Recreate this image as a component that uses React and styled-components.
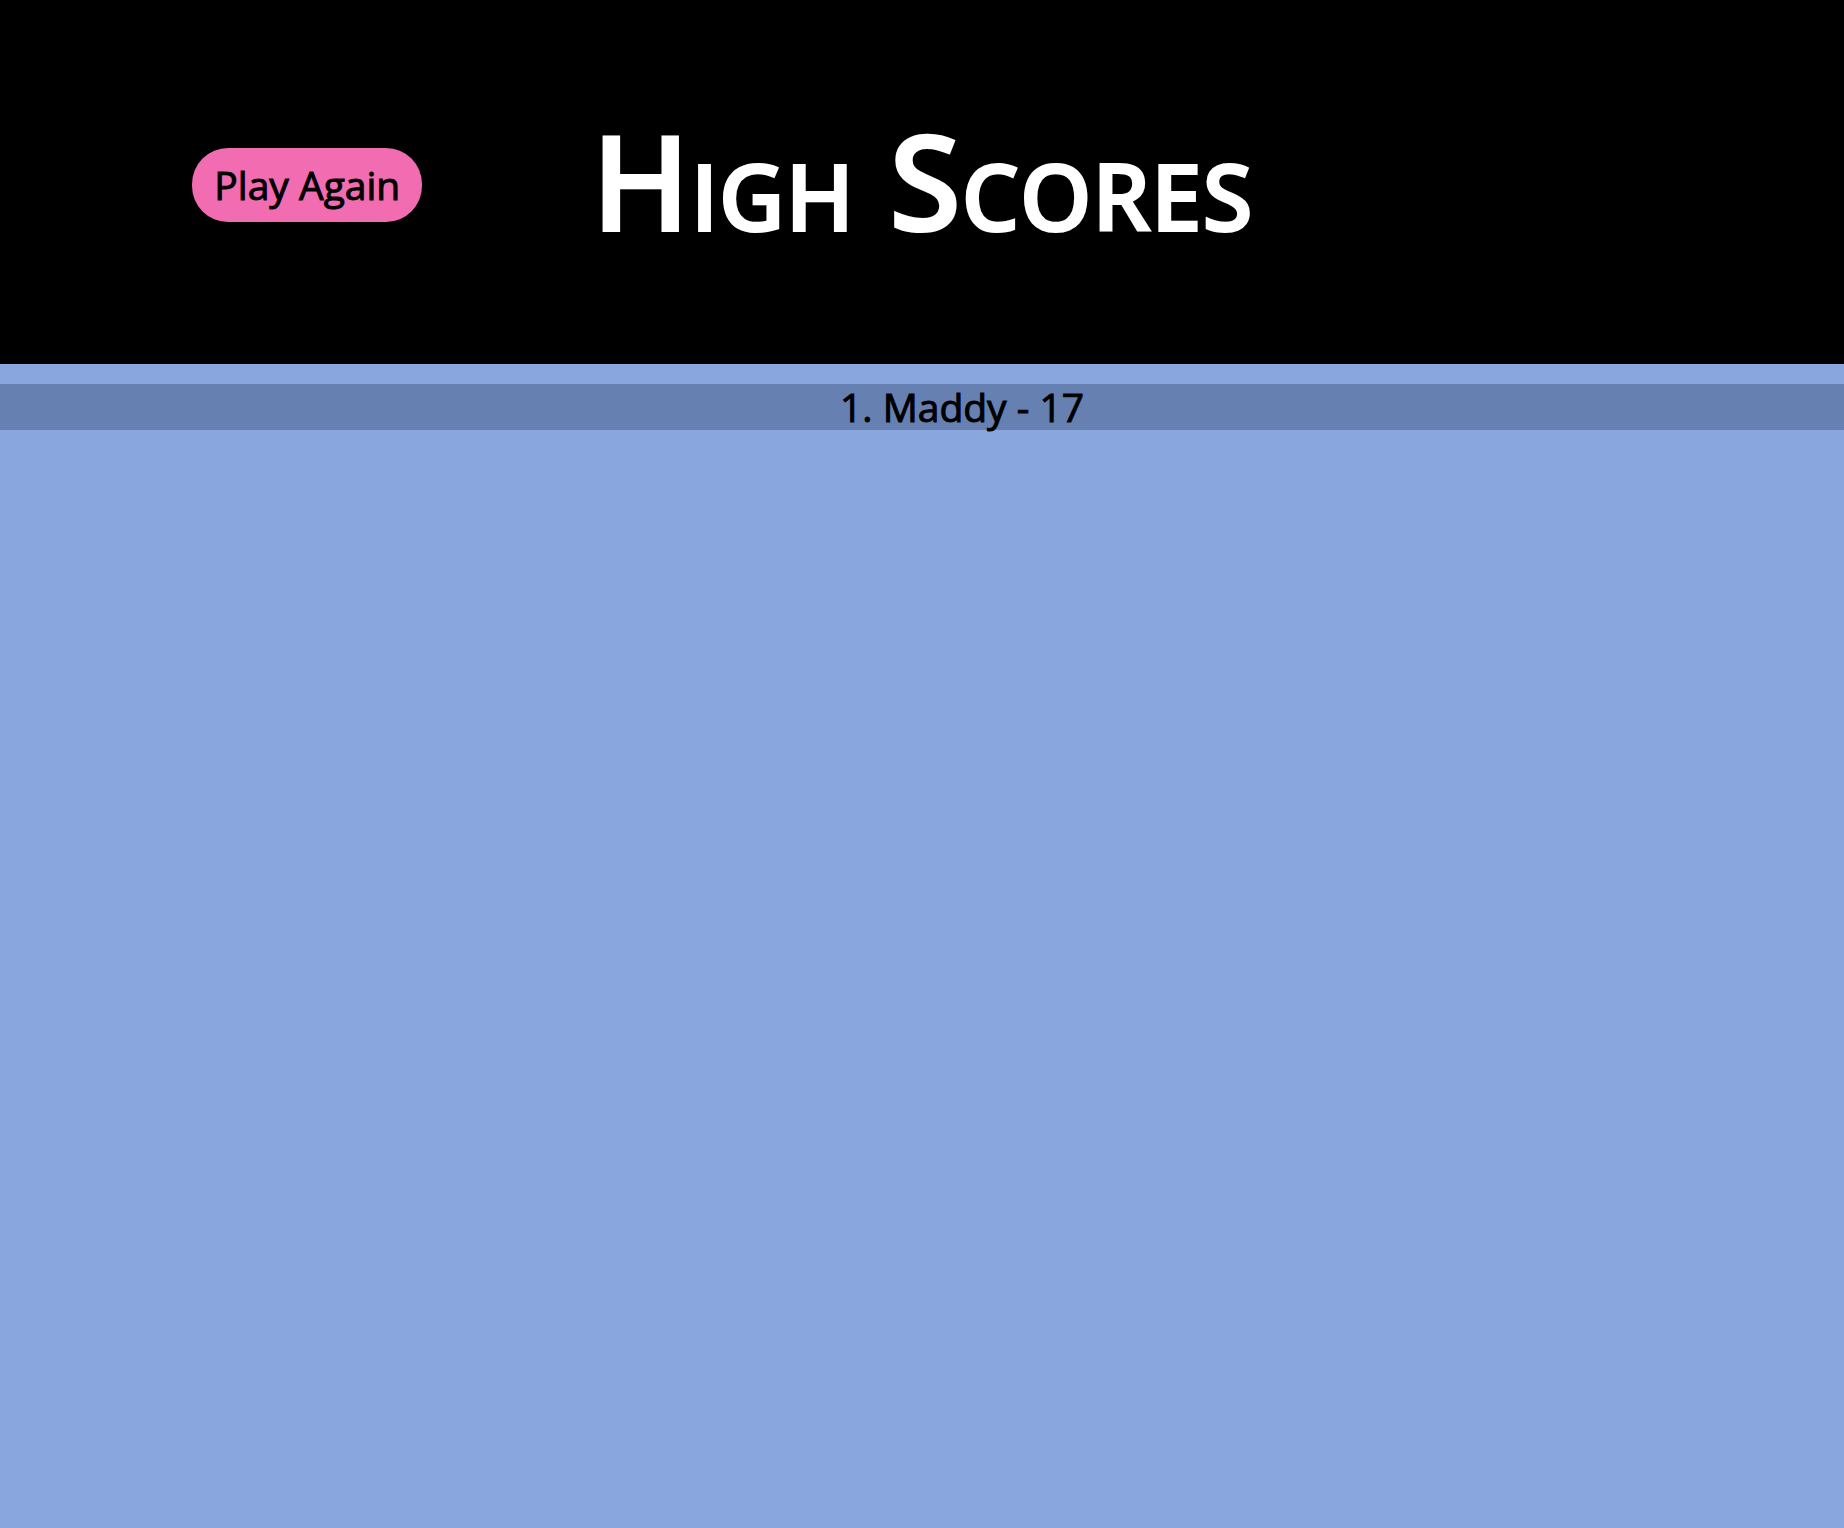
import React from "react";
import styled, { createGlobalStyle } from "styled-components";

const GlobalStyle = createGlobalStyle`
  body {
    margin: 0;
    background: #8aa6de;
    color: #000;
    font-family: "Trebuchet MS", "Open Sans", "Noto Sans", sans-serif;
    font-size: 39px;
    line-height: 46px;
    -webkit-text-stroke: 1px currentColor;
  }
`;

const Header = styled.header`
  display: grid;
  grid-template-columns: repeat(3, minmax(0, 1fr));
  align-items: center;
  padding: 103px 0 97px;
  background: #000;
`;

const Title = styled.h1`
  margin: 0;
  padding-bottom: 10px;
  justify-self: center;
  color: #fff;
  font-size: 132px;
  font-weight: 600;
  line-height: 154px;
  font-variant: small-caps;
  white-space: nowrap;
  -webkit-text-stroke: 2px currentColor;
`;

const PlayButton = styled.button`
  justify-self: center;
  padding: 14px 22px;
  border: 0;
  border-radius: 36px;
  background: #f26cb2;
  color: inherit;
  font: inherit;
  cursor: pointer;
`;

const ScoreList = styled.ol`
  margin: 20px 0;
  padding: 0;
  list-style: none;
`;

const Score = styled.li`
  padding-left: 80px;
  background: #6680b2;
  text-align: center;
`;

const scores = [{ name: "Maddy", points: 17 }];

export default function App() {
  return (
    <>
      <GlobalStyle />
      <Header>
        <PlayButton type="button">Play Again</PlayButton>
        <Title>High Scores</Title>
      </Header>
      <main>
        <ScoreList>
          {scores.map(({ name, points }, index) => (
            <Score key={name}>{`${index + 1}. ${name} - ${points}`}</Score>
          ))}
        </ScoreList>
      </main>
    </>
  );
}
